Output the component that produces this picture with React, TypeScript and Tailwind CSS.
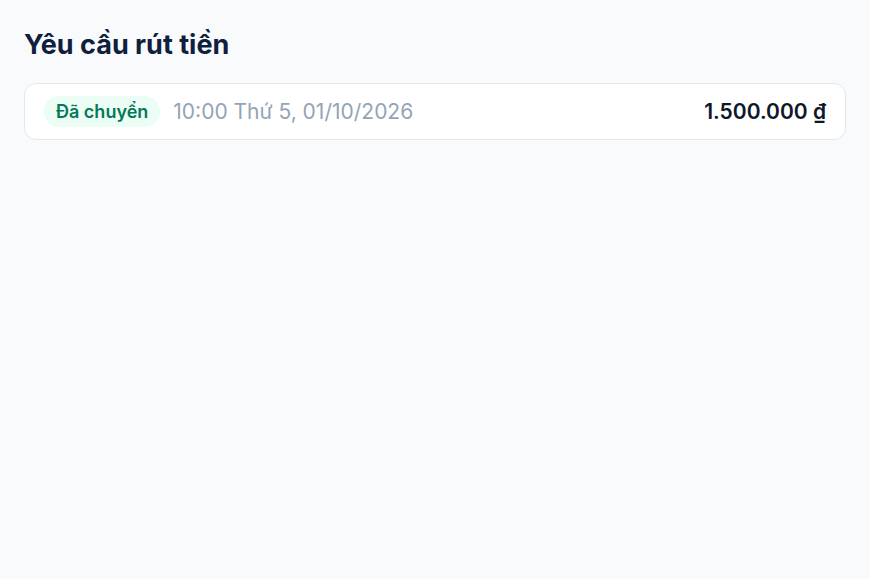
import React from "react";

export default function App() {
  return (
    <div
      className="min-h-[579px] w-full bg-[#f8fafc] px-6 pt-[29px]"
      style={{ fontFamily: "Inter, 'Noto Sans', sans-serif" }}
    >
      <h1 className="text-[27px] font-bold leading-8 text-[#0f1f3d]">Yêu cầu rút tiền</h1>
      <div className="mt-[22px] flex h-[57px] items-center justify-between rounded-xl border border-[#e2e8f0] bg-white pl-[19px] pr-[19px]">
        <div className="flex items-center gap-[13px]">
          <span className="rounded-full bg-[#ecfdf5] px-3 py-1 text-[18px] font-semibold leading-[23px] text-[#047857]">
            Đã chuyển
          </span>
          <span className="text-[21px] text-[#94a3b8]">10:00 Thứ 5, 01/10/2026</span>
        </div>
        <span className="text-[21px] font-semibold text-[#0f172a]">1.500.000 ₫</span>
      </div>
    </div>
  );
}
